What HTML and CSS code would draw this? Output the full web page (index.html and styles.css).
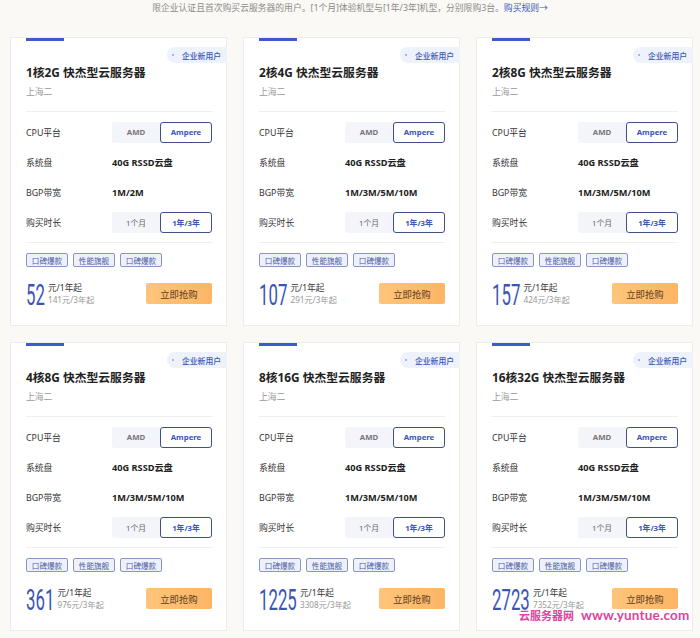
FILE: index.html
```html
<!DOCTYPE html>
<html lang="zh-CN">
<head>
<meta charset="utf-8">
<title>快杰型云服务器</title>
<link rel="stylesheet" href="styles.css">
</head>
<body>
<div class="page">
  <p class="notice">限企业认证且首次购买云服务器的用户。[1个月]体验机型与[1年/3年]机型，分别限购3台。<a class="rule">购买规则→</a></p>
  <div class="grid">

    <div class="card">
      <span class="bar"></span>
      <span class="badge"><i class="dot"></i>企业新用户</span>
      <h3 class="title">1核2G 快杰型云服务器</h3>
      <p class="region">上海二</p>
      <div class="specs">
        <div class="row"><span class="label">CPU平台</span><div class="seg"><span class="opt">AMD</span><span class="opt on">Ampere</span></div></div>
        <div class="row"><span class="label">系统盘</span><span class="val">40G RSSD云盘</span></div>
        <div class="row"><span class="label">BGP带宽</span><span class="val">1M/2M</span></div>
        <div class="row"><span class="label">购买时长</span><div class="seg"><span class="opt light">1个月</span><span class="opt on">1年/3年</span></div></div>
      </div>
      <div class="tags"><span class="tag">口碑爆款</span><span class="tag">性能旗舰</span><span class="tag">口碑爆款</span></div>
      <div class="buy">
        <div class="price"><span class="num" style="--d:2"><span class="digits">52</span></span><div class="sub"><span class="y1">元/1年起</span><span class="y3">141元/3年起</span></div></div>
        <button class="btn">立即抢购</button>
      </div>
    </div>

    <div class="card">
      <span class="bar"></span>
      <span class="badge"><i class="dot"></i>企业新用户</span>
      <h3 class="title">2核4G 快杰型云服务器</h3>
      <p class="region">上海二</p>
      <div class="specs">
        <div class="row"><span class="label">CPU平台</span><div class="seg"><span class="opt">AMD</span><span class="opt on">Ampere</span></div></div>
        <div class="row"><span class="label">系统盘</span><span class="val">40G RSSD云盘</span></div>
        <div class="row"><span class="label">BGP带宽</span><span class="val">1M/3M/5M/10M</span></div>
        <div class="row"><span class="label">购买时长</span><div class="seg"><span class="opt light">1个月</span><span class="opt on">1年/3年</span></div></div>
      </div>
      <div class="tags"><span class="tag">口碑爆款</span><span class="tag">性能旗舰</span><span class="tag">口碑爆款</span></div>
      <div class="buy">
        <div class="price"><span class="num" style="--d:3"><span class="digits">107</span></span><div class="sub"><span class="y1">元/1年起</span><span class="y3">291元/3年起</span></div></div>
        <button class="btn">立即抢购</button>
      </div>
    </div>

    <div class="card">
      <span class="bar"></span>
      <span class="badge"><i class="dot"></i>企业新用户</span>
      <h3 class="title">2核8G 快杰型云服务器</h3>
      <p class="region">上海二</p>
      <div class="specs">
        <div class="row"><span class="label">CPU平台</span><div class="seg"><span class="opt">AMD</span><span class="opt on">Ampere</span></div></div>
        <div class="row"><span class="label">系统盘</span><span class="val">40G RSSD云盘</span></div>
        <div class="row"><span class="label">BGP带宽</span><span class="val">1M/3M/5M/10M</span></div>
        <div class="row"><span class="label">购买时长</span><div class="seg"><span class="opt light">1个月</span><span class="opt on">1年/3年</span></div></div>
      </div>
      <div class="tags"><span class="tag">口碑爆款</span><span class="tag">性能旗舰</span><span class="tag">口碑爆款</span></div>
      <div class="buy">
        <div class="price"><span class="num" style="--d:3"><span class="digits">157</span></span><div class="sub"><span class="y1">元/1年起</span><span class="y3">424元/3年起</span></div></div>
        <button class="btn">立即抢购</button>
      </div>
    </div>

    <div class="card">
      <span class="bar"></span>
      <span class="badge"><i class="dot"></i>企业新用户</span>
      <h3 class="title">4核8G 快杰型云服务器</h3>
      <p class="region">上海二</p>
      <div class="specs">
        <div class="row"><span class="label">CPU平台</span><div class="seg"><span class="opt">AMD</span><span class="opt on">Ampere</span></div></div>
        <div class="row"><span class="label">系统盘</span><span class="val">40G RSSD云盘</span></div>
        <div class="row"><span class="label">BGP带宽</span><span class="val">1M/3M/5M/10M</span></div>
        <div class="row"><span class="label">购买时长</span><div class="seg"><span class="opt light">1个月</span><span class="opt on">1年/3年</span></div></div>
      </div>
      <div class="tags"><span class="tag">口碑爆款</span><span class="tag">性能旗舰</span><span class="tag">口碑爆款</span></div>
      <div class="buy">
        <div class="price"><span class="num" style="--d:3"><span class="digits">361</span></span><div class="sub"><span class="y1">元/1年起</span><span class="y3">976元/3年起</span></div></div>
        <button class="btn">立即抢购</button>
      </div>
    </div>

    <div class="card">
      <span class="bar"></span>
      <span class="badge"><i class="dot"></i>企业新用户</span>
      <h3 class="title">8核16G 快杰型云服务器</h3>
      <p class="region">上海二</p>
      <div class="specs">
        <div class="row"><span class="label">CPU平台</span><div class="seg"><span class="opt">AMD</span><span class="opt on">Ampere</span></div></div>
        <div class="row"><span class="label">系统盘</span><span class="val">40G RSSD云盘</span></div>
        <div class="row"><span class="label">BGP带宽</span><span class="val">1M/3M/5M/10M</span></div>
        <div class="row"><span class="label">购买时长</span><div class="seg"><span class="opt light">1个月</span><span class="opt on">1年/3年</span></div></div>
      </div>
      <div class="tags"><span class="tag">口碑爆款</span><span class="tag">性能旗舰</span><span class="tag">口碑爆款</span></div>
      <div class="buy">
        <div class="price"><span class="num" style="--d:4"><span class="digits">1225</span></span><div class="sub"><span class="y1">元/1年起</span><span class="y3">3308元/3年起</span></div></div>
        <button class="btn">立即抢购</button>
      </div>
    </div>

    <div class="card">
      <span class="bar"></span>
      <span class="badge"><i class="dot"></i>企业新用户</span>
      <h3 class="title">16核32G 快杰型云服务器</h3>
      <p class="region">上海二</p>
      <div class="specs">
        <div class="row"><span class="label">CPU平台</span><div class="seg"><span class="opt">AMD</span><span class="opt on">Ampere</span></div></div>
        <div class="row"><span class="label">系统盘</span><span class="val">40G RSSD云盘</span></div>
        <div class="row"><span class="label">BGP带宽</span><span class="val">1M/3M/5M/10M</span></div>
        <div class="row"><span class="label">购买时长</span><div class="seg"><span class="opt light">1个月</span><span class="opt on">1年/3年</span></div></div>
      </div>
      <div class="tags"><span class="tag">口碑爆款</span><span class="tag">性能旗舰</span><span class="tag">口碑爆款</span></div>
      <div class="buy">
        <div class="price"><span class="num" style="--d:4"><span class="digits">2723</span></span><div class="sub"><span class="y1">元/1年起</span><span class="y3">7352元/3年起</span></div></div>
        <button class="btn">立即抢购</button>
      </div>
    </div>

  </div>
  <div class="watermark"><span class="wm-cn">云服务器网</span><span class="wm-url">www.yuntue.com</span></div>
</div>
</body>
</html>
```

FILE: styles.css
```css
* { box-sizing: border-box; }
html, body { margin: 0; padding: 0; }
body {
  background: #fbf9f5;
  font-family: "Noto Sans", "Noto Sans CJK SC", sans-serif;
  color: #333;
  width: 700px;
  height: 638px;
  overflow: hidden;
}
.page { position: relative; width: 700px; height: 638px; }
.notice {
  margin: 0;
  height: 16px;
  line-height: 16px;
  font-size: 8.8px;
  color: #8a8a8a;
  text-align: center;
}
.rule { color: #3b57b8; }
.grid {
  margin-top: 21px;
  padding-left: 10px;
  display: grid;
  grid-template-columns: repeat(3, 217px);
  column-gap: 16px;
  row-gap: 16px;
}
.card {
  position: relative;
  height: 289px;
  background: #fff;
  border: 1px solid #eeecea;
  padding: 0 14px 0 15px;
}
.bar {
  position: absolute;
  top: 0;
  left: 15px;
  width: 38px;
  height: 3px;
  background: #3d5ccb;
}
.badge {
  position: absolute;
  top: 9px;
  right: -1px;
  height: 16px;
  padding: 0 6px 0 5px;
  display: flex;
  align-items: center;
  background: #eef2fb;
  border-radius: 8px 0 0 8px;
  font-size: 7.8px;
  color: #3a57b8;
  font-weight: 500;
}
.dot {
  width: 2px;
  height: 2px;
  border-radius: 50%;
  background: #8fa2d6;
  margin-right: 8px;
}
.title {
  margin: 0;
  padding-top: 26px;
  font-size: 11.8px;
  line-height: 16px;
  font-weight: 700;
  color: #222;
}
.region {
  margin: 6px 0 0;
  font-size: 8.8px;
  line-height: 12px;
  color: #999;
  padding-bottom: 13px;
  border-bottom: 1px solid #efefef;
}
.specs {
  padding: 5px 0 5px;
  border-bottom: 1px solid #efefef;
}
.row {
  height: 30px;
  display: flex;
  align-items: center;
}
.label {
  width: 86px;
  font-size: 8.8px;
  color: #333;
}
.val {
  font-size: 9.2px;
  font-weight: 700;
  color: #222;
}
.seg {
  width: 100px;
  height: 21px;
  display: flex;
  background: #f3f5fa;
  border-radius: 3px;
}
.opt {
  flex: 0 0 48px;
  display: flex;
  align-items: center;
  justify-content: center;
  font-size: 7.8px;
  font-weight: 700;
  color: #777;
}
.opt.light { font-weight: 400; color: #666; }
.opt.on {
  flex: 1 1 auto;
  background: #fff;
  border: 1px solid #3e5087;
  border-radius: 3px;
  color: #3a56b8;
}
.tags {
  margin-top: 10px;
  display: flex;
  gap: 5px;
}
.tag {
  width: 42px;
  height: 14px;
  display: flex;
  align-items: center;
  justify-content: center;
  font-size: 7.6px;
  color: #4b5f9f;
  background: #eef1fb;
  border: 1px solid #8896c4;
  border-radius: 2px;
}
.buy {
  margin-top: 16px;
  display: flex;
  align-items: center;
  justify-content: space-between;
}
.price {
  display: flex;
  align-items: center;
  height: 21px;
}
.num {
  display: inline-block;
  width: calc(var(--d) * 9.5px + 3px);
  height: 21px;
  overflow: visible;
  position: relative;
}
.digits {
  display: inline-block;
  font-family: Roboto, "Noto Sans", sans-serif;
  font-size: 30px;
  line-height: 21px;
  font-weight: 400;
  color: #3b55b5;
  transform: scaleX(0.56);
  transform-origin: 0 50%;
  white-space: nowrap;
  margin-top: 1px;
}
.sub {
  display: flex;
  flex-direction: column;
  line-height: 11px;
}
.y1 { font-size: 8.6px; color: #333; }
.y3 { font-size: 8.2px; color: #999; }
.btn {
  width: 66px;
  height: 21px;
  border: 0;
  border-radius: 2px;
  padding: 0;
  background: linear-gradient(90deg, #fec57a, #fcb564);
  font-family: "Noto Sans CJK SC", sans-serif;
  font-size: 9.4px;
  color: #5b3c1c;
}
.watermark {
  position: absolute;
  left: 519px;
  top: 608px;
  display: flex;
  align-items: center;
  gap: 7px;
  color: #de439e;
  white-space: nowrap;
}
.wm-cn {
  font-family: "Noto Sans CJK SC", sans-serif;
  font-weight: 700;
  font-size: 11px;
  line-height: 14px;
  text-shadow: 0 0 2px #fff;
}
.wm-url {
  font-family: Lato, "Noto Sans", sans-serif;
  font-weight: 700;
  font-size: 13.5px;
  line-height: 14px;
  letter-spacing: 0.2px;
  text-shadow: 0 0 2px #fff;
}
```
